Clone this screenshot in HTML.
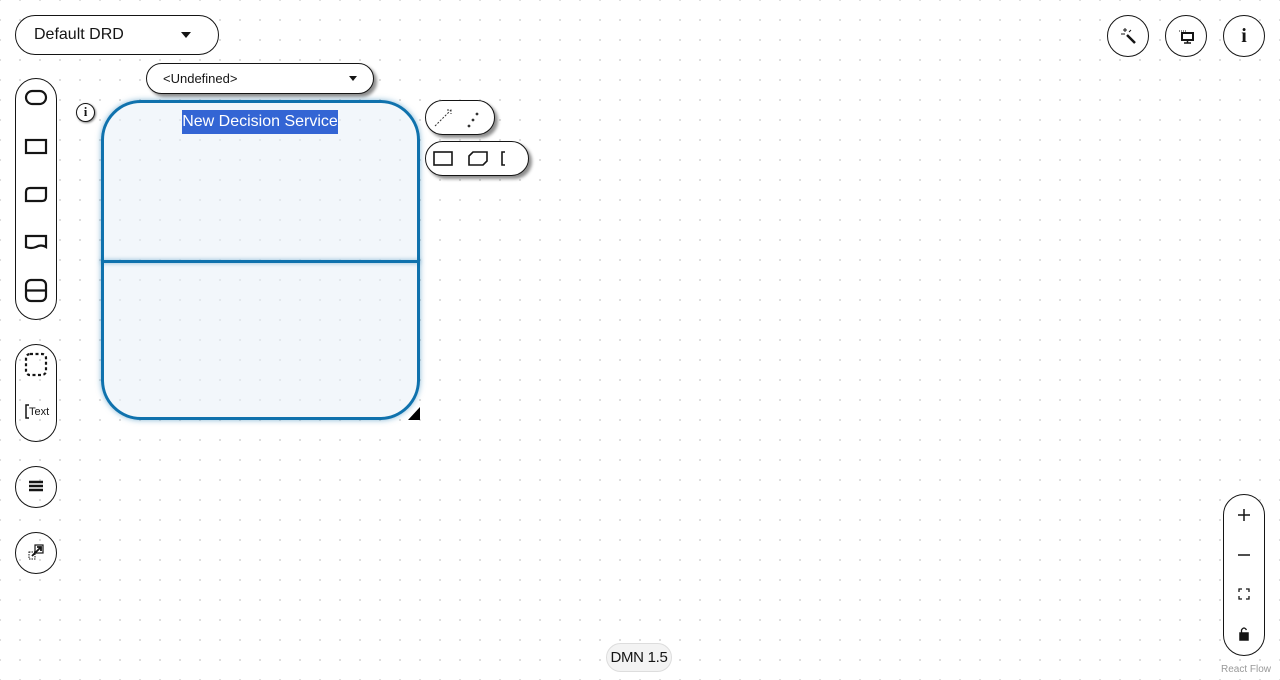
<!DOCTYPE html>
<html><head><meta charset="utf-8"><style>
*{box-sizing:border-box;margin:0;padding:0}
body{width:1280px;height:680px;overflow:hidden;position:relative;background:#fff;
background-image:radial-gradient(circle,#d6d6d6 0.9px,transparent 1.1px);background-size:20px 20px;background-position:10px 10px;
font-family:"Liberation Sans",sans-serif;color:#151515}
.abs{position:absolute}
.pill{position:absolute;border:1px solid #151515;background:#fff;border-radius:999px}
.circ{position:absolute;width:42px;height:42px;border:1px solid #151515;border-radius:50%;background:#fff;display:flex;align-items:center;justify-content:center}
.caret{width:0;height:0;border-left:5px solid transparent;border-right:5px solid transparent;border-top:6px solid #151515;position:absolute}
svg{position:absolute}
</style></head><body>

<div class="pill" style="left:15px;top:15px;width:204px;height:40px"></div>
<div class="abs" style="left:34px;top:26px;font-size:16px;">Default DRD</div>
<div class="caret" style="left:181px;top:32px"></div>

<div class="pill" style="left:146px;top:63px;width:228px;height:31px;box-shadow:3px 3px 3px rgba(0,0,0,.45)"></div>
<div class="abs" style="left:163px;top:71px;font-size:13px">&lt;Undefined&gt;</div>
<div class="caret" style="left:349px;top:76px;border-left-width:4px;border-right-width:4px;border-top-width:5px"></div>

<div class="pill" style="left:15px;top:78px;width:42px;height:242px"></div>
<svg style="left:0;top:0" width="70" height="600" fill="none" stroke="#151515" stroke-width="2.2">
<rect x="26" y="91" width="20" height="13" rx="6.5"/>
<rect x="26" y="140" width="20" height="13"/>
<path d="M26 201 V192 Q26 188 30 188 H46 V197 Q46 201 42 201 Z"/>
<path d="M26 236 H46 V247 Q41 244 36 247 Q31 249 26 247 Z"/>
<rect x="26" y="280" width="20" height="21" rx="5"/><path d="M26 290.5 H46"/>
<rect x="26" y="354" width="20" height="21" rx="4" stroke-dasharray="3 2.5"/>
<path d="M29 405 H26 V418 H29" stroke-width="1.5"/>
<path d="M29 482 H43 M29 486 H43 M29 490 H43" stroke-width="2.5"/>
<rect x="29" y="552" width="6" height="7" stroke-width="1" stroke-dasharray="1.5 1"/>
<rect x="35" y="545" width="8" height="8" stroke-width="1.2"/>
<path d="M32 556 L41 547 M37 547 H41 V551" stroke-width="1.8"/>
</svg>
<div class="abs" style="left:29px;top:406px;font-size:11px">Text</div>
<div class="pill" style="left:15px;top:344px;width:42px;height:98px;background:transparent"></div>
<div class="circ" style="left:15px;top:466px;background:transparent"></div>
<div class="circ" style="left:15px;top:532px;background:transparent"></div>

<div class="abs" style="left:101px;top:100px;width:319px;height:320px;border:3px solid #0f72ad;border-radius:40px;background:rgba(231,240,248,.55);box-shadow:0 0 6px rgba(15,114,173,.5)"></div>
<div class="abs" style="left:101px;top:260px;width:319px;height:3px;background:#0f72ad;box-shadow:0 0 4px rgba(15,114,173,.5)"></div>
<div class="abs" style="left:182px;top:110px;width:156px;height:24px;background:#3365d4;color:#fff;font-size:16px;line-height:24px;text-align:center">New Decision Service</div>
<svg style="left:408px;top:407px" width="12" height="13"><path d="M12 0 V13 H0 Z" fill="#000"/></svg>
<div class="abs" style="left:76px;top:103px;width:19px;height:19px;border:1.5px solid #151515;border-radius:50%;background:#fff;box-shadow:1px 1px 2px rgba(0,0,0,.5);font:bold 13px 'Liberation Serif',serif;text-align:center;line-height:16px">i</div>

<div class="pill" style="left:425px;top:100px;width:70px;height:35px;box-shadow:3px 3px 3px rgba(0,0,0,.45)"></div>
<svg style="left:425px;top:100px" width="70" height="35" fill="none" stroke="#333" stroke-width="1">
<path d="M10 26 L26 10 M22 10 H26 V14" stroke-dasharray="2 1.5"/>
<circle cx="44" cy="26" r=".9" fill="#333"/><circle cx="48" cy="20" r=".9" fill="#333"/><circle cx="52" cy="14" r=".9" fill="#333"/>
</svg>
<div class="pill" style="left:425px;top:141px;width:104px;height:35px;box-shadow:3px 3px 3px rgba(0,0,0,.45)"></div>
<svg style="left:425px;top:141px" width="104" height="35" fill="none" stroke="#151515" stroke-width="1.6">
<rect x="9" y="11" width="18" height="13"/>
<path d="M44 24 V15 L48 11 H62 V20 L58 24 Z"/>
<path d="M80 11 H77 V24 H80"/>
</svg>

<div class="circ" style="left:1107px;top:15px"><svg style="position:static" width="20" height="20" fill="none" stroke="#151515"><path d="M9 9 L17 17" stroke-width="2.5"/><path d="M7 2 V6 M5 4 H9 M3 8 H7 M11 6 l2 -2" stroke-width="1"/></svg></div>
<div class="circ" style="left:1165px;top:15px"><svg style="position:static" width="20" height="20" fill="none" stroke="#151515"><path d="M3 5 H11" stroke-dasharray="1 1"/><rect x="6" y="7" width="11" height="7" stroke-width="2"/><path d="M11.5 14 V17 M8 17 H15" stroke-width="1.5"/></svg></div>
<div class="circ" style="left:1223px;top:15px;font:bold 20px 'Liberation Serif',serif">i</div>

<div class="pill" style="left:1223px;top:494px;width:42px;height:162px"></div>
<svg style="left:1223px;top:494px" width="42" height="162" fill="none" stroke="#151515" stroke-width="1.5">
<path d="M21 15 V27 M15 21 H27 M15 61 H27"/>
<path d="M16 98 V95 H19 M23 95 H26 V98 M26 102 V105 H23 M19 105 H16 V102" stroke-width="1.3"/>
<rect x="17" y="139" width="8" height="7" fill="#151515"/><path d="M18.5 139 V136 Q21 132 23.5 136" stroke-width="1.3"/>
</svg>
<div class="abs" style="left:1221px;top:664px;font-size:10px;color:#999">React Flow</div>

<div class="abs" style="left:606px;top:643px;width:66px;height:29px;border:1px solid #ddd;border-radius:15px;background:#f3f3f3;font-size:15px;line-height:27px;text-align:center;letter-spacing:-.3px">DMN 1.5</div>
</body></html>
